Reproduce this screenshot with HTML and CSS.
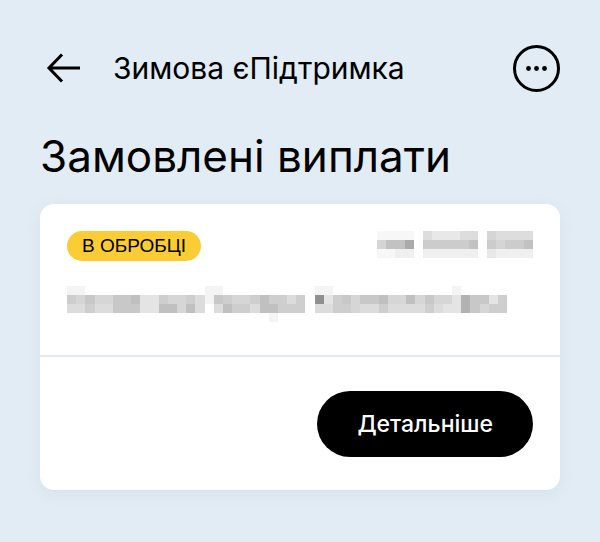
FILE: index.html
```html
<!DOCTYPE html>
<html lang="uk">
<head>
    <meta charset="utf-8" />
    <meta name="viewport" content="width=device-width, initial-scale=1" />
    <title>Зимова єПідтримка</title>
    <link rel="stylesheet" href="styles.css">
</head>
<body>
    <header class="topbar">
        <button class="icon-button back" type="button" aria-label="Назад">
            <svg width="36" height="32" viewBox="0 0 36 32" fill="none" stroke="#000" stroke-width="3">
                <path d="M34 16H3M16 2.5L3 16L16 29.5" />
            </svg>
        </button>
        <span class="topbar-title">Зимова єПідтримка</span>
        <button class="icon-button" type="button" aria-label="Меню">
            <svg width="48" height="48" viewBox="0 0 48 48">
                <circle cx="24.5" cy="24.5" r="22" fill="none" stroke="#000" stroke-width="3" />
                <circle cx="16.5" cy="24.5" r="2.4" />
                <circle cx="24.5" cy="24.5" r="2.4" />
                <circle cx="32.5" cy="24.5" r="2.4" />
            </svg>
        </button>
    </header>

    <main>
        <h1>Замовлені виплати</h1>

        <section class="card">
            <div class="card-info">
                <div class="card-row">
                    <span class="badge">В ОБРОБЦІ</span>
                    <!-- hidden date -->
                    <svg class="masked masked-date" viewBox="0 0 17 3" preserveAspectRatio="none" shape-rendering="crispEdges" aria-hidden="true">
                        <path fill="#f7f7f7" d="M0 0h4v1H0zM0 2h2v1H0z" />
                        <path fill="#efefef" d="M2 2h2v1H2zM5 2h6v1H5zM13 2h4v1h-4z" />
                        <path fill="#e8e8e8" d="M6 0h3v1H6zM12 2h1v1h-1z" />
                        <path fill="#dddddd" d="M5 0h1v1H5zM9 0h2v1H9zM13 0h4v1h-4z" />
                        <path fill="#d5d5d5" d="M12 0h1v1h-1zM0 1h1v1H0zM13 1h1v1h-1z" />
                        <path fill="#cccccc" d="M5 1h5v1H5zM12 1h1v1h-1zM14 1h2v1h-2z" />
                        <path fill="#c2c2c2" d="M1 1h2v1H1zM10 1h1v1h-1zM16 1h1v1h-1z" />
                        <path fill="#aaaaaa" d="M3 1h1v1H3z" />
                    </svg>
                </div>
                <!-- hidden name -->
                <svg class="masked masked-name" viewBox="0 0 48 4" preserveAspectRatio="none" shape-rendering="crispEdges" aria-hidden="true">
                    <path fill="#f4f4f4" d="M0 0h2v1H0zM15 0h2v1h-2zM15 1h1v1h-1zM27 0h2v1h-2zM42 0h1v1h-1zM22 3h1v1h-1z" />
                    <path fill="#e4e4e4" d="M8 1h2v2H8zM28 1h1v1h-1zM42 1h1v1h-1zM46 1h1v1h-1zM41 2h2v1h-2z" />
                    <path fill="#dcdcdc" d="M14 1h1v2h-1zM24 1h1v1h-1zM0 2h2v1H0zM3 2h2v1H3zM16 2h1v1h-1zM20 2h1v1h-1zM27 2h2v1h-2zM32 2h2v1h-2zM35 2h4v1h-4zM40 2h1v1h-1z" />
                    <path fill="#d6d6d6" d="M1 1h1v1H1zM3 1h2v1H3zM11 1h2v1h-2zM12 2h1v1h-1zM18 1h2v1h-2zM31 1h1v2h-1zM35 1h2v1h-2zM38 1h1v1h-1zM40 1h2v1h-2zM45 2h1v1h-1z" />
                    <path fill="#cecece" d="M0 1h1v1H0zM2 2h1v1H2zM10 1h1v1h-1zM13 1h1v1h-1zM17 1h1v1h-1zM20 1h1v1h-1zM22 1h2v1h-2zM25 1h1v2h-1zM18 2h2v1h-2zM23 2h2v1h-2zM29 1h1v2h-1zM30 2h1v1h-1zM34 2h1v1h-1zM39 2h1v1h-1zM46 2h1v1h-1zM47 1h1v2h-1z" />
                    <path fill="#c8c8c8" d="M2 1h1v1H2zM5 1h2v2H5zM7 2h1v1H7zM16 1h1v1h-1zM30 1h1v1h-1zM32 1h2v1h-2zM39 1h1v1h-1zM44 1h2v1h-2zM44 2h1v1h-1z" />
                    <path fill="#c0c0c0" d="M7 1h1v1H7zM10 2h2v1h-2zM13 2h1v1h-1zM21 1h1v2h-1zM22 2h1v1h-1zM17 2h1v1h-1zM34 1h1v1h-1zM37 1h1v1h-1z" />
                    <path fill="#b2b2b2" d="M43 1h1v2h-1z" />
                    <path fill="#909090" d="M27 1h1v1h-1z" />
                </svg>
            </div>
            <div class="card-actions">
                <button class="details-button" type="button">Детальніше</button>
            </div>
        </section>
    </main>
</body>
</html>
```

FILE: styles.css
```css
* {
    box-sizing: border-box;
}

body {
    margin: 0;
    padding: 44px 40px;
    background-color: #e2ecf4;
    color: #000;
    font-family: Inter, "Noto Sans", sans-serif;
}

.topbar {
    display: flex;
    align-items: center;
}

.topbar-title {
    flex: 1;
    padding-left: 31px;
    font-size: 30px;
    line-height: 48px;
}

.icon-button {
    display: flex;
    padding: 0;
    border: none;
    background: none;
    cursor: pointer;
}

.back {
    margin-left: 6px;
}

h1 {
    margin: 40px 0 24px;
    font-size: 44px;
    font-weight: 400;
    line-height: 48px;
}

.card {
    background-color: #fff;
    border-radius: 14px;
    box-shadow: 0 4px 16px rgba(160, 190, 215, 0.2);
}

.card-info {
    padding: 27px 27px 33px;
    border-bottom: 2px solid #e2ecee;
}

.card-row {
    display: flex;
    justify-content: space-between;
}

.badge {
    padding: 0 15px;
    border-radius: 15px;
    background-color: #fbcc33;
    font-family: "Liberation Sans", Arial, sans-serif;
    font-size: 19px;
    line-height: 30px;
}

.masked {
    display: block;
}

.masked-date {
    width: 156px;
    height: 27px;
}

.masked-name {
    width: 440px;
    height: 36px;
    max-width: 100%;
    margin-top: 25px;
}

.card-actions {
    display: flex;
    justify-content: flex-end;
    padding: 34px 27px 33px;
}

.details-button {
    padding: 0 40px;
    border: none;
    border-radius: 33px;
    background-color: #000;
    color: #fff;
    font-family: inherit;
    font-size: 23px;
    font-weight: 500;
    line-height: 66px;
    cursor: pointer;
}
```
